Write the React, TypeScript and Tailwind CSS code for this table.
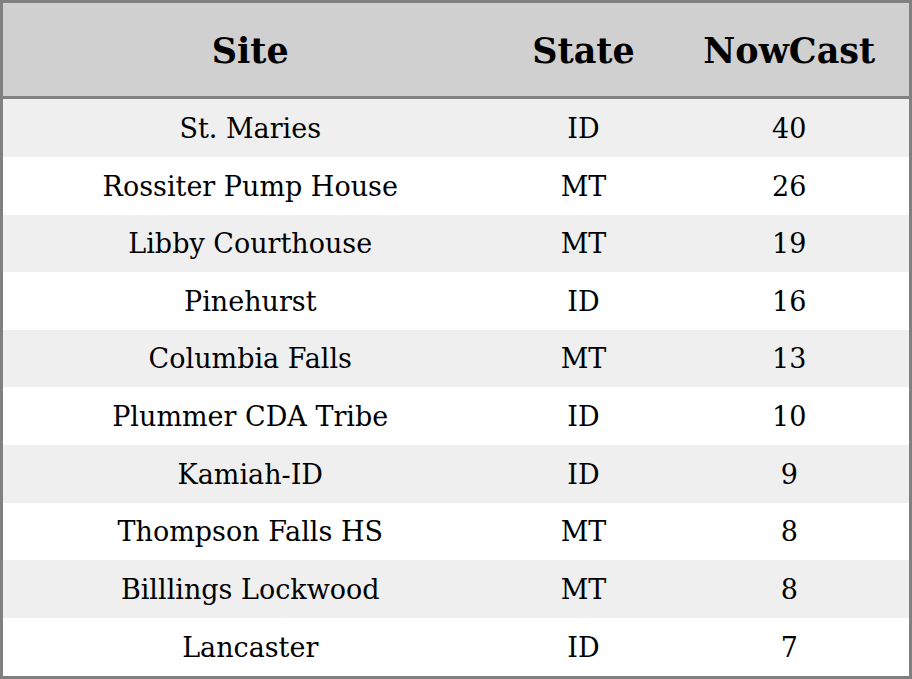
const rows: [string, string, number][] = [
  ['St. Maries', 'ID', 40],
  ['Rossiter Pump House', 'MT', 26],
  ['Libby Courthouse', 'MT', 19],
  ['Pinehurst', 'ID', 16],
  ['Columbia Falls', 'MT', 13],
  ['Plummer CDA Tribe', 'ID', 10],
  ['Kamiah-ID', 'ID', 9],
  ['Thompson Falls HS', 'MT', 8],
  ['Billlings Lockwood', 'MT', 8],
  ['Lancaster', 'ID', 7],
];

export default function App() {
  return (
    <div className="w-[912px] h-[679px] bg-white font-['DejaVu_Serif',serif] text-black">
      <table className="w-full h-full border-[3px] border-[#808080] border-collapse table-fixed">
        <colgroup>
          <col className="w-[496px]" />
          <col className="w-[172px]" />
          <col />
        </colgroup>
        <thead>
          <tr className="h-[96px] bg-[#d0d0d0] border-b-[3px] border-[#808080] text-[35px] font-bold">
            <th className="pt-[3px]">Site</th>
            <th className="pt-[3px]">State</th>
            <th className="pt-[3px]">NowCast</th>
          </tr>
        </thead>
        <tbody className="text-[27px]">
          {rows.map(([site, state, val], i) => (
            <tr key={site} className={i % 2 === 0 ? 'bg-[#efefef]' : 'bg-white'}>
              <td className="text-center pt-[2px]">{site}</td>
              <td className="text-center pt-[2px]">{state}</td>
              <td className="text-center pt-[2px]">{val}</td>
            </tr>
          ))}
        </tbody>
      </table>
    </div>
  );
}
